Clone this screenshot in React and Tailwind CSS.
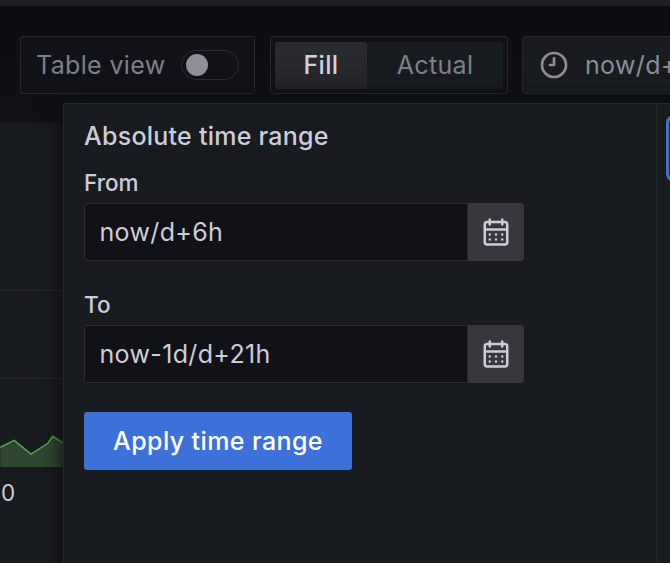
const CalendarIcon = () => (
  <svg viewBox="0 0 24 24" className="w-[30px] h-[30px] fill-[#ccccdc]">
    <path d="M12,19a1,1,0,1,0-1-1A1,1,0,0,0,12,19Zm5,0a1,1,0,1,0-1-1A1,1,0,0,0,17,19Zm0-4a1,1,0,1,0-1-1A1,1,0,0,0,17,15Zm-5,0a1,1,0,1,0-1-1A1,1,0,0,0,12,15ZM19,3H18V2a1,1,0,0,0-2,0V3H8V2A1,1,0,0,0,6,2V3H5A3,3,0,0,0,2,6V20a3,3,0,0,0,3,3H19a3,3,0,0,0,3-3V6A3,3,0,0,0,19,3Zm1,17a1,1,0,0,1-1,1H5a1,1,0,0,1-1-1V11H20ZM20,9H4V6A1,1,0,0,1,5,5H6V6A1,1,0,0,0,8,6V5h8V6a1,1,0,0,0,2,0V5h1a1,1,0,0,1,1,1ZM7,15a1,1,0,1,0-1-1A1,1,0,0,0,7,15Zm0,4a1,1,0,1,0-1-1A1,1,0,0,0,7,19Z" />
  </svg>
);

const ClockIcon = () => (
  <svg viewBox="0 0 24 24" className="w-[32px] h-[32px] fill-[#8e8e96]">
    <path d="M12,2A10,10,0,1,0,22,12,10,10,0,0,0,12,2Zm0,18a8,8,0,1,1,8-8A8,8,0,0,1,12,20Zm0-14a1,1,0,0,0-1,1v4H9a1,1,0,0,0,0,2h3a1,1,0,0,0,1-1V7A1,1,0,0,0,12,6Z" />
  </svg>
);

const TimeField = ({ label, value, className }) => (
  <div className={className}>
    <div className="text-[22.5px] leading-[28px] font-medium text-[#ccccdc]">{label}</div>
    <div className="mt-[6px] flex h-[58px] w-[440px]">
      <div className="flex flex-1 items-center rounded-l-[3px] border border-[#2a2c31] bg-[#111217] pl-[14.5px] pt-[2px] text-[25px] tracking-[0.35px] text-[#ccccdc]">
        {value}
      </div>
      <div className="flex w-[56px] items-center justify-center rounded-r-[3px] bg-[#36383d]">
        <CalendarIcon />
      </div>
    </div>
  </div>
);

export default function App() {
  return (
    <div className="relative flex h-[563px] w-[670px] flex-col overflow-hidden bg-[#111217] font-['Inter',sans-serif]">
      <div className="h-[6px] bg-[#1b1e23]" />

      <div className="flex h-[117px] bg-gradient-to-b from-[#0b0c10] to-[#111217] pl-[20px] pt-[30px]">
        <div className="flex h-[58px] w-[235px] shrink-0 items-center gap-[15px] rounded-[3px] border border-[#26282d] bg-[#111217] pl-[15px]">
          <span className="pt-[2px] text-[25px] tracking-[0.35px] text-[#7d7f8a]">Table view</span>
          <div className="flex h-[30px] w-[58px] items-center rounded-full border border-[#2a2c31] pl-[4px]">
            <div className="h-[22px] w-[22px] rounded-full bg-[#8e8e9a]" />
          </div>
        </div>

        <div className="ml-[15px] flex h-[58px] w-[238px] shrink-0 items-center rounded-[3px] border border-[#26282d] bg-[#111217] px-[4px]">
          <div className="flex h-[47px] w-[92px] items-center justify-center rounded-[3px] bg-gradient-to-b from-[#2a2c31] to-[#232529] pt-[1px] text-[25px] tracking-[0.35px] font-medium text-[#d0d0de]">
            Fill
          </div>
          <div className="flex h-[47px] w-[136px] items-center justify-center rounded-r-[3px] bg-[#181b1f] pt-[1px] text-[25px] tracking-[0.35px] text-[#7d7f8a]">
            Actual
          </div>
        </div>

        <div className="ml-[14px] flex h-[58px] w-[220px] shrink-0 items-center gap-[15px] rounded-[3px] border border-[#26282d] bg-[#181b1f] pl-[15px]">
          <ClockIcon />
          <span className="whitespace-nowrap pt-[2px] text-[25px] tracking-[0.35px] text-[#8a8c96]">now/d+6h</span>
        </div>
      </div>

      <div className="flex-1 bg-gradient-to-r from-[#181b1f] to-[#111317]">
        <div className="h-[168px] border-b border-[#26282d]" />
        <div className="h-[88px] border-b border-[#26282d]" />
        <svg viewBox="0 0 64 90" className="h-[89px] w-[64px]">
          <path d="M0 69L14 62L31 76L48 65L53 58L64 65V89H0Z" fill="#2f4630" />
          <path d="M0 69L14 62L31 76L48 65L53 58L64 65" fill="none" stroke="#5aa64b" strokeWidth="1.5" />
        </svg>
        <div className="mt-[11px] pl-[1px] text-[22.5px] leading-[28px] text-[#ccccdc]">0</div>
      </div>

      {/* time range popover */}
      <div className="absolute left-[63px] top-[103px] flex h-[480px] w-[640px] border border-[#26282d] bg-[#181b1f] shadow-[0_0_20px_#0b0c10]">
        <div className="w-[593px] border-r border-[#26282d] pl-[20px] pt-[16px]">
          <div className="text-[25px] leading-[32px] tracking-[0.25px] font-medium text-[#ccccdc]">Absolute time range</div>
          <TimeField label="From" value="now/d+6h" className="mt-[17px]" />
          <TimeField label="To" value="now-1d/d+21h" className="mt-[30px]" />
          <button className="mt-[29px] flex h-[58px] w-[268px] items-center justify-center rounded-[3px] bg-[#3d71d9] pt-[2px] text-[25px] tracking-[0.4px] font-medium text-white">
            Apply time range
          </button>
        </div>
        <div className="pl-[9px] pt-[11px]">
          <div className="h-[67px] w-[20px] rounded-[8px] border-[3px] border-[#3d71d9]" />
        </div>
      </div>
    </div>
  );
}
